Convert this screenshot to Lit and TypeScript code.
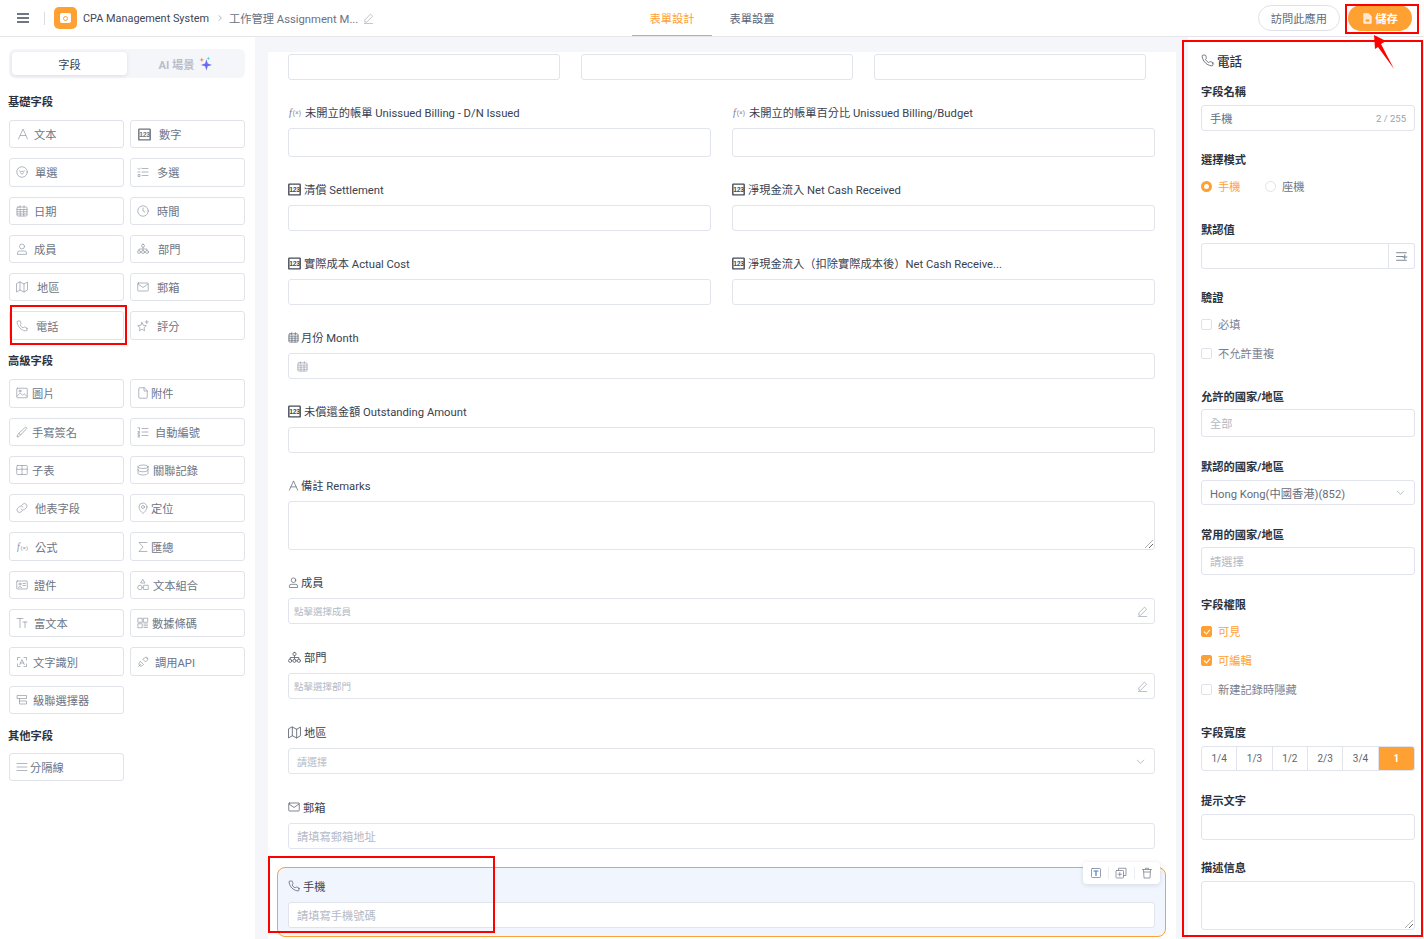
import { LitElement, html, css, svg } from "lit";
import { customElement } from "lit/decorators.js";

const P = {
  A: svg`<path d="M3 22 12 2l9 20M6.500 15h11"/>`,
  num: svg`<rect x="1.500" y="2" width="21" height="20" rx="1" stroke-width="2.600"/><text x="12" y="16.800" text-anchor="middle" font-size="12.500" font-weight="700" font-family="Liberation Sans" letter-spacing="-.4" fill="currentColor" stroke="none">123</text>`,
  radio: svg`<circle cx="12" cy="12" r="10.500"/><path d="M7 10c2.800 1.400 7.200 1.400 10 0M8.500 13.500l3.500 3 3.500-3"/>`,
  check: svg`<path d="M10 5h12M10 12h12M10 19h12M2 5l2 2 3-3M2 12h4M3 17h3v4H3z"/>`,
  cal: svg`<rect x="2" y="4" width="20" height="18" rx="2"/><path d="M8 1.500V6M16 1.500V6M2 9h20M2 13.500h20M2 18h20M8.500 9v13M15.500 9v13"/>`,
  clock: svg`<circle cx="12" cy="12" r="10.500"/><path d="M12 6v6l4 2"/>`,
  user: svg`<circle cx="12" cy="7" r="5"/><path d="M3 22v-2a4 4 0 0 1 4-4h10a4 4 0 0 1 4 4v2z"/>`,
  org: svg`<rect x="9" y="2.500" width="6" height="6" rx="3"/><circle cx="4" cy="18" r="3"/><circle cx="12" cy="18" r="3"/><circle cx="20" cy="18" r="3"/><path d="M12 8.500V15M4 15v-3h16v3"/>`,
  map: svg`<path d="M1 6v16l7-4 8 4 7-4V2l-7 4-8-4z"/><path d="M8 2v16M16 6v16"/>`,
  mail: svg`<rect x="1.500" y="4" width="21" height="16" rx="1.500"/><path d="M2 6l10 7 10-7"/>`,
  phone: svg`<path d="M22 16.920v3a2 2 0 0 1-2.180 2 19.790 19.790 0 0 1-8.630-3.070 19.500 19.500 0 0 1-6-6 19.790 19.790 0 0 1-3.070-8.670A2 2 0 0 1 4.110 2h3a2 2 0 0 1 2 1.720 12.840 12.840 0 0 0 .7 2.810 2 2 0 0 1-.45 2.110L8.090 9.910a16 16 0 0 0 6 6l1.270-1.270a2 2 0 0 1 2.110-.45 12.840 12.840 0 0 0 2.810.7A2 2 0 0 1 22 16.920z"/>`,
  star: svg`<path d="M10 5l2.500 5.500 6 .8-4.400 4.200 1.100 6-5.200-3-5.200 3 1.100-6L1.500 11.300l6-.8zM19.500 1v6M16.500 4h6"/>`,
  image: svg`<rect x="1.500" y="2.500" width="21" height="19" rx="1.500"/><circle cx="8" cy="8" r="2"/><path d="M2.500 18l6-6 4.500 4.500 3-3 6 5.500"/>`,
  file: svg`<path d="M14 1.500H6a2.500 2.500 0 0 0-2.500 2.500v16A2.500 2.500 0 0 0 6 22.500h12a2.500 2.500 0 0 0 2.500-2.500V8z"/><path d="M14 1.500V8h6.500"/>`,
  pen: svg`<path d="M20 2.500l2 2L9 18l-3-3zM6 15l-3 3-1 4 4-1 3-3"/>`,
  auto: svg`<path d="M10 5h12M10 12h12M10 19h12M2 3.500h3V8M2 11h3v2.500H2V16h3M2 18h3v2H2.500M2 22h3"/>`,
  table: svg`<rect x="1.500" y="3" width="21" height="18" rx="1.500"/><path d="M1.500 10.500h21M12 3v18"/>`,
  db: svg`<ellipse cx="12" cy="5.500" rx="10" ry="3.500"/><path d="M2 5.500v13c0 2 4.500 3.500 10 3.500s10-1.500 10-3.500v-13M2 12c0 2 4.500 3.500 10 3.500s10-1.500 10-3.500"/>`,
  link: svg`<path d="M10 14a5 5 0 0 0 7.540.54l3-3a5 5 0 0 0-7.070-7.070l-1.720 1.710"/><path d="M14 10a5 5 0 0 0-7.540-.54l-3 3a5 5 0 0 0 7.070 7.070l1.710-1.710"/>`,
  pin: svg`<path d="M20 10c0 7-8 13-8 13s-8-6-8-13a8 8 0 0 1 16 0z"/><circle cx="12" cy="10" r="3"/>`,
  fx: svg`<text x="0" y="18" font-size="19" font-family="Liberation Serif" font-style="italic" fill="currentColor" stroke="none">f</text><text x="7" y="17" font-size="12" font-family="Liberation Sans" fill="currentColor" stroke="none">(×)</text>`,
  sigma: svg`<path d="M20 3H4l8 9-8 9h16"/>`,
  id: svg`<rect x="1.500" y="4" width="21" height="16" rx="1"/><circle cx="8" cy="10" r="2"/><path d="M4.500 17c.5-2.500 6.500-2.500 7 0M14 9h5M14 13h5"/>`,
  shapes: svg`<path d="M12 1.500l4 6.500H8z"/><circle cx="6" cy="17" r="4.500"/><rect x="14" y="12.500" width="8.500" height="8.500"/>`,
  tt: svg`<path d="M2 3h12M8 3v18M14 10h8M18 10v11"/>`,
  qr: svg`<rect x="2.500" y="2.500" width="8" height="8"/><rect x="13.500" y="2.500" width="8" height="8"/><rect x="2.500" y="13.500" width="8" height="8"/><path d="M14 14h7M14 17.500h7M14 21h7"/>`,
  ocr: svg`<path d="M3 8V3h5M16 3h5v5M21 16v5h-5M8 21H3v-5M7.500 17 12 7l4.500 10M9 14h6"/>`,
  plug: svg`<path d="M3 21l4-4M7 11l6 6-2 2a4 4 0 0 1-6-6zM12 7l5 5 3-3a3.500 3.500 0 0 0-5-5zM19 2l3 3"/>`,
  casc: svg`<path d="M3 3h18v6H3zM7 9v11h14v-6H7"/>`,
  div: svg`<path d="M2 5h20M2 12h20M2 19h20"/>`,
  chev: svg`<path d="M5 9l7 7 7-7"/>`,
  edit: svg`<path d="M17 3l4 4L8 20H4v-4zM3 23h18"/>`,
  fn: svg`<path d="M3 5h18M3 12h12M3 19h18M18 9v8M14.500 13H22"/>`,
  t: svg`<rect x="3" y="3" width="18" height="18" rx="1.500"/><path d="M8 8h8M12 8v9" stroke="#3b7fe0" stroke-width="2.400"/>`,
  copy: svg`<rect x="2" y="7" width="15" height="15" rx="1.500"/><path d="M7 7V2.500h15V17h-5M9.500 11v7M6 14.500h7"/>`,
  trash: svg`<path d="M3 5h18M9 5V2.500h6V5M5 5l1 17h12l1-17M6 10h12"/>`,
  save: svg`<path d="M14 1.500H4v21h16V7.500z" fill="#fff" fill-opacity=".75" stroke="#fff"/><rect x="8" y="14" width="8" height="5" fill="#ffa033" stroke="none"/>`,
};

const ic = (name: keyof typeof P, cls = "") =>
  html`<svg class="ic i-${name} ${cls}" viewBox="0 0 24 24">${P[name]}</svg>`;

type Item = [keyof typeof P, string, number];
const basic: Item[] = [
  ["A", "文本", 25], ["num", "數字", 28],
  ["radio", "單選", 26], ["check", "多選", 27],
  ["cal", "日期", 25], ["clock", "時間", 27],
  ["user", "成員", 25], ["org", "部門", 28],
  ["map", "地區", 28], ["mail", "郵箱", 27],
  ["phone", "電話", 27], ["star", "評分", 27],
];
const advanced: Item[] = [
  ["image", "圖片", 23], ["file", "附件", 21],
  ["pen", "手寫簽名", 23], ["auto", "自動編號", 25],
  ["table", "子表", 23], ["db", "關聯記錄", 23],
  ["link", "他表字段", 26], ["pin", "定位", 21],
  ["fx", "公式", 26], ["sigma", "匯總", 21],
  ["id", "證件", 25], ["shapes", "文本組合", 23],
  ["tt", "富文本", 25], ["qr", "數據條碼", 22],
  ["ocr", "文字識別", 24], ["plug", "調用API", 25],
  ["casc", "級聯選擇器", 24],
];
const other: Item[] = [["div", "分隔線", 21]];

@customElement("app-root")
export class AppRoot extends LitElement {
  static styles = css`
    :host { display: block; width: 1424px; height: 939px; overflow: hidden; position: relative; background: #fff;
      font-family: Roboto, "Noto Sans CJK TC", sans-serif; font-size: 11.25px; color: #3a4150; }
    * { box-sizing: border-box; }
    .ic { width: 13px; height: 13px; flex: none; fill: none; stroke: currentColor; stroke-width: 1.500; stroke-linecap: round; stroke-linejoin: round; display: block; }

    header { height: 37px; border-bottom: 1px solid #e4e6ea; display: flex; align-items: center; position: relative; background: #fff; }
    .burger { margin-left: 17px; width: 12px; height: 10px; border-top: 2px solid #6f7785; border-bottom: 2px solid #6f7785; position: relative; flex: none; }
    .burger::after { content: ""; position: absolute; left: 0; right: 0; top: 2px; height: 2px; background: #6f7785; }
    .vline { width: 1px; height: 13px; background: #d9dce3; margin: 0 9px 0 15px; flex: none; }
    .logo { width: 23px; height: 22px; border-radius: 5px; background: #ffa033; display: flex; align-items: center; justify-content: center; flex: none; }
    .logo i { width: 11px; height: 10px; background: #fff; border-radius: 2px; display: flex; align-items: center; justify-content: center; }
    .logo b { width: 5px; height: 5px; border: 1.500px solid #ffa033; border-radius: 50%; }
    .app { margin-left: 6px; font-size: 10.900px; color: #3f4654; white-space: nowrap; }
    .crumb { color: #8f96a3; margin: 0 7px 0 7px; width: 6px; }
    .crumb .ic { width: 8px; height: 8px; transform: rotate(-90deg); stroke-width: 2.200; }
    .page { color: #6b7280; white-space: nowrap; }
    .pencil { margin-left: 5px; width: 11px; height: 11px; color: #a3a9b4; }
    .tabs { position: absolute; left: 632px; top: 0; height: 36px; display: flex; }
    .tab { width: 80px; height: 36px; display: flex; align-items: center; justify-content: center; color: #5c6473; }
    .tab.on { color: #ffa033; border-bottom: 1.500px solid #ffa033; }
    .actions { margin-left: auto; display: flex; align-items: center; gap: 8px; padding-right: 12px; }
    .visit { width: 82px; height: 26px; border: 1px solid #dfe2e8; border-radius: 13px; display: flex; align-items: center; justify-content: center; color: #646c7a; background: #fff; }
    .savebtn { width: 64px; height: 26px; border-radius: 13px; background: #ffa033; color: #fff; display: flex; align-items: center; justify-content: center; gap: 2px; font-weight: 700; }
    .savebtn .ic { width: 11px; height: 13px; }

    .body { display: flex; height: 902px; }
    aside { width: 255px; flex: none; padding: 12px 10px 0 9px; background: #fff; }
    .seg { height: 29px; background: #f5f6fa; border-radius: 6px; padding: 3px; display: flex; }
    .seg > div { flex: 1; display: flex; align-items: center; justify-content: center; }
    .seg .active { flex: none; width: 115px; background: #fff; border-radius: 4px; box-shadow: 0 1px 4px rgba(30,40,70,.12); color: #3a4150; }
    .seg .ai { color: #b9bec8; font-weight: 700; gap: 4px; padding-left: 1px; }
    .spark { width: 13px; height: 15px; display: block; }
    h4 { margin: 0; font-size: 11.25px; height: 18px; line-height: 22px; font-weight: 700; color: #2c3340; margin-bottom: 10px; margin-left: -1px; }
    .h1 { margin-top: 14px; }
    .h2 { margin-top: 11.500px; }
    .h3 { margin-top: 12px; margin-bottom: 9px; }
    .grid { display: grid; grid-template-columns: 115px 115px; column-gap: 6px; row-gap: 10px; grid-auto-rows: 28.300px; }
    .item { border: 1px solid #e0e3ea; border-radius: 3px; display: flex; align-items: center; padding-left: 6px; color: #6d7483; white-space: nowrap; background: #fff; }
    .item .ic { width: 12px; height: 12px; color: #8a909d; stroke-width: 1.300; }
    .item .i-num { width: 13px; height: 13px; margin: 0 -1px 0 1px; stroke-width: 1.500; color: #6c7280; }
    .item .i-fx { width: 14px; margin-right: -2px; }
    .item .i-A { margin-left: 1px; margin-right: -1px; }

    main { flex: 1; background: #f5f6fa; padding: 15px 12px 0 13px; min-width: 0; }
    .card { background: #fff; height: 100%; padding: 2px 0 0 0; overflow: hidden; position: relative; }
    .row3 { display: grid; grid-template-columns: 272px 272px 272px; column-gap: 21px; padding-left: 20px; }
    .row2 { display: grid; grid-template-columns: 423px 423px; column-gap: 21px; padding-left: 20px; }
    .row1 { padding: 0 21px 0 20px; }
    .mt { margin-top: 24px; }
    .mt25 { margin-top: 25px; }
    .lbl { height: 18px; padding-bottom: 2px; display: flex; align-items: center; gap: 2px; color: #3a4150; white-space: nowrap; margin-bottom: 6px; }
    .lbl .ic { color: #555d6c; width: 11px; height: 11px; }
    .lbl .i-mail, .lbl .i-phone { width: 12px; height: 12px; margin-right: 1px; }
    .lbl .i-num, .lbl .i-org, .lbl .i-map { width: 13px; height: 13px; margin-right: 1px; }
    .lbl .i-num { color: #444b59; }
    .lbl .i-fx { width: 15px; height: 13px; color: #7a8190; }
    .inp { border: 1px solid #e1e4ec; border-radius: 3px; background: #fff; height: 26px; display: flex; align-items: center; padding: 0 8px; color: #b4b9c4; justify-content: space-between; white-space: nowrap; }
    .h29 { height: 29px; }
    .ta { height: 49px; position: relative; }
    .small { font-size: 9.500px; padding: 0 6px 0 5px; }
    .region { font-size: 10px; }
    .c { color: #9aa1ad; }
    .c.ic { width: 11px; height: 11px; }
    .sel { margin: 18px 10px 0 9px; border: 1px solid #ffa033; border-radius: 8px; background: #f1f5fd; padding: 10px 10px 8px 10px; position: relative; height: 70px; }
    .tools { position: absolute; right: 5px; top: -6px; width: 77px; height: 22px; background: #fff; border-radius: 4px; box-shadow: 0 1px 5px rgba(30,40,70,.14); display: flex; align-items: center; justify-content: space-around; padding: 0 4px; color: #7d8492; }
    .tools .ic { width: 12px; height: 12px; stroke-width: 1.600; }
    .tools u { width: 1px; height: 12px; background: #eceef2; }
    .grip { position: absolute; right: 1px; bottom: 1px; width: 8px; height: 8px; background: repeating-linear-gradient(135deg, transparent 0 2px, #666 2px 3px); clip-path: polygon(100% 0, 100% 100%, 0 100%); }

    .panel { width: 236px; flex: none; background: #fff; padding: 15px 9px 0 13px; }
    .ptitle { height: 18px; padding-bottom: 2px; display: flex; align-items: center; gap: 3px; font-size: 12.600px; color: #2c3340; font-weight: 500; }
    .ptitle .ic { color: #555d6c; }
    .g { margin-top: 20px; }
    .g.a { margin-top: 12px; }
    .g.t { margin-top: 19px; }
    .g.l { margin-top: 23px; }
    .g.r { margin-top: 24px; }
    .g.s { margin-top: 18px; }
    .pl { font-weight: 700; line-height: 22px; height: 18px; color: #2c3340; margin-bottom: 5px; white-space: nowrap; }
    .pl.n { margin-bottom: 4px; }
    .pl.rad { margin-bottom: 10px; }
    .pl.chk { margin-bottom: 9px; }
    .dark { color: #646c7a; }
    .count { font-size: 9.500px; color: #9aa1ad; }
    .h28 { height: 28px; }
    .h25 { height: 25px; }
    .h26 { height: 26px; }
    .radios { display: flex; align-items: center; height: 18px; padding-bottom: 2px; }
    .rd { display: flex; align-items: center; gap: 6px; width: 64px; color: #6d7483; white-space: nowrap; }
    .dot { width: 11px; height: 11px; border-radius: 50%; border: 1px solid #dfe2e8; flex: none; background: #fff; }
    .rd.on { color: #ffa033; }
    .rd.on .dot { border: 3px solid #ffa033; }
    .addon { display: flex; height: 26px; }
    .addon .inp { flex: 1; border-radius: 3px 0 0 3px; }
    .addbtn { width: 26px; border: 1px solid #e1e4ec; border-left: 0; border-radius: 0 3px 3px 0; display: flex; align-items: center; justify-content: center; color: #646c7a; }
    .cb { display: flex; align-items: center; gap: 6px; height: 20px; padding-bottom: 2px; margin-bottom: 9px; color: #7a8190; white-space: nowrap; }
    .cb:last-child { margin-bottom: 0; }
    .cb i { width: 11px; height: 11px; border: 1px solid #dfe2e8; border-radius: 2px; display: block; background: #fff; flex: none; }
    .cb.on { color: #ffa033; }
    .cb.on i { background: #ffa033; border-color: #ffa033; position: relative; }
    .cb.on i::after { content: ""; position: absolute; left: 3px; top: 1px; width: 3px; height: 5px; border: solid #fff; border-width: 0 1px 1px 0; transform: rotate(40deg); }
    .wseg { display: grid; grid-template-columns: repeat(6, 1fr); height: 25px; border: 1px solid #e1e4ec; border-radius: 3px; overflow: hidden; }
    .wseg div { display: flex; align-items: center; justify-content: center; font-size: 10px; color: #5c6473; border-right: 1px solid #e1e4ec; }
    .wseg div:last-child { background: #ffa033; color: #fff; border-right: 0; font-weight: 700; }

    .overlay { position: absolute; border: 2px solid #f00; pointer-events: none; }
    .o1 { left: 1345px; top: 4px; width: 74px; height: 30px; }
    .o2 { left: 1182px; top: 40px; width: 241px; height: 897px; }
    .o3 { left: 10px; top: 305px; width: 117px; height: 40px; }
    .o4 { left: 268px; top: 856px; width: 227px; height: 77px; }
    .arrow { position: absolute; left: 0; top: 0; width: 1424px; height: 939px; pointer-events: none; }
  `;

  private cell(i: Item) {
    return html`<div class="item">${ic(i[0])}<span style="margin-left:${i[2] - 19}px">${i[1]}</span></div>`;
  }

  render() {
    return html`
      <header>
        <div class="burger"></div><div class="vline"></div>
        <div class="logo"><i><b></b></i></div>
        <span class="app">CPA Management System</span>
        <span class="crumb">${ic("chev")}</span>
        <span class="page">工作管理 Assignment M...</span>
        ${ic("edit", "pencil")}
        <div class="tabs"><div class="tab on">表單設計</div><div class="tab">表單設置</div></div>
        <div class="actions">
          <div class="visit">訪問此應用</div>
          <div class="savebtn">${ic("save")}<span>儲存</span></div>
        </div>
      </header>
      <div class="body">
        <aside>
          <div class="seg">
            <div class="active">字段</div>
            <div class="ai">AI 場景
              <svg class="spark" viewBox="0 0 14 15"><path d="M8 3l1.400 4.600L14 9l-4.600 1.400L8 15l-1.400-4.600L2 9l4.600-1.400z" fill="#6a6cf0"/><path d="M3 1l.7 1.800L5.500 3.500l-1.800.7L3 6l-.7-1.800L.5 3.500l1.800-.7z" fill="#ff8a4c"/><path d="M10 0l.5 1.500L12 2l-1.500.5L10 4l-.5-1.500L8 2l1.500-.5z" fill="#38c6e0"/></svg>
            </div>
          </div>
          <h4 class="h1">基礎字段</h4>
          <div class="grid">${basic.map((i) => this.cell(i))}</div>
          <h4 class="h2">高級字段</h4>
          <div class="grid">${advanced.map((i) => this.cell(i))}</div>
          <h4 class="h3">其他字段</h4>
          <div class="grid">${other.map((i) => this.cell(i))}</div>
        </aside>

        <main>
          <div class="card">
            <div class="row3"><div class="inp"></div><div class="inp"></div><div class="inp"></div></div>

            <div class="row2 mt">
              <div><div class="lbl">${ic("fx")}未開立的帳單 Unissued Billing - D/N Issued</div><div class="inp h29"></div></div>
              <div><div class="lbl">${ic("fx")}未開立的帳單百分比 Unissued Billing/Budget</div><div class="inp h29"></div></div>
            </div>
            <div class="row2 mt">
              <div><div class="lbl">${ic("num")}清償 Settlement</div><div class="inp"></div></div>
              <div><div class="lbl">${ic("num")}淨現金流入 Net Cash Received</div><div class="inp"></div></div>
            </div>
            <div class="row2 mt">
              <div><div class="lbl">${ic("num")}實際成本 Actual Cost</div><div class="inp"></div></div>
              <div><div class="lbl">${ic("num")}淨現金流入（扣除實際成本後）Net Cash Receive...</div><div class="inp"></div></div>
            </div>
            <div class="row1 mt">
              <div class="lbl">${ic("cal")}月份 Month</div>
              <div class="inp">${ic("cal", "c")}</div>
            </div>
            <div class="row1 mt">
              <div class="lbl">${ic("num")}未償還金額 Outstanding Amount</div>
              <div class="inp"></div>
            </div>
            <div class="row1 mt">
              <div class="lbl">${ic("A")}備註 Remarks</div>
              <div class="inp ta"><span class="grip"></span></div>
            </div>
            <div class="row1 mt">
              <div class="lbl">${ic("user")}成員</div>
              <div class="inp small">點擊選擇成員${ic("edit", "c")}</div>
            </div>
            <div class="row1 mt25">
              <div class="lbl">${ic("org")}部門</div>
              <div class="inp small">點擊選擇部門${ic("edit", "c")}</div>
            </div>
            <div class="row1 mt25">
              <div class="lbl">${ic("map")}地區</div>
              <div class="inp region">請選擇${ic("chev", "c")}</div>
            </div>
            <div class="row1 mt25">
              <div class="lbl">${ic("mail")}郵箱</div>
              <div class="inp">請填寫郵箱地址</div>
            </div>
            <div class="sel">
              <div class="lbl">${ic("phone")}手機</div>
              <div class="inp">請填寫手機號碼</div>
              <div class="tools">${ic("t")}<u></u>${ic("copy")}<u></u>${ic("trash")}</div>
            </div>
          </div>
        </main>

        <section class="panel">
          <div class="ptitle">${ic("phone")}電話</div>
          <div class="g a"><div class="pl">字段名稱</div>
            <div class="inp h26 dark">手機<span class="count">2 / 255</span></div></div>
          <div class="g t"><div class="pl rad">選擇模式</div>
            <div class="radios"><div class="rd on"><span class="dot"></span>手機</div><div class="rd"><span class="dot"></span>座機</div></div></div>
          <div class="g r"><div class="pl">默認值</div>
            <div class="addon"><div class="inp"></div><div class="addbtn">${ic("fn")}</div></div></div>
          <div class="g t"><div class="pl chk">驗證</div>
            <div class="cb"><i></i>必填</div><div class="cb"><i></i>不允許重複</div></div>
          <div class="g l"><div class="pl n">允許的國家/地區</div><div class="inp h28">全部</div></div>
          <div class="g"><div class="pl">默認的國家/地區</div>
            <div class="inp h25 dark">Hong Kong(中國香港)(852)${ic("chev", "c")}</div></div>
          <div class="g"><div class="pl n">常用的國家/地區</div><div class="inp h28">請選擇</div></div>
          <div class="g"><div class="pl chk">字段權限</div>
            <div class="cb on"><i></i>可見</div><div class="cb on"><i></i>可編輯</div><div class="cb"><i></i>新建記錄時隱藏</div></div>
          <div class="g l"><div class="pl">字段寬度</div>
            <div class="wseg"><div>1/4</div><div>1/3</div><div>1/2</div><div>2/3</div><div>3/4</div><div>1</div></div></div>
          <div class="g"><div class="pl">提示文字</div><div class="inp h26"></div></div>
          <div class="g s"><div class="pl">描述信息</div><div class="inp ta"><span class="grip"></span></div></div>
        </section>
      </div>

      <div class="overlay o1"></div>
      <div class="overlay o2"></div>
      <div class="overlay o3"></div>
      <div class="overlay o4"></div>
      <svg class="arrow" viewBox="0 0 1424 939"><polygon points="1374,35 1386,41 1381,44 1394,69 1378,47 1375,49" fill="#f00"/></svg>
    `;
  }
}
